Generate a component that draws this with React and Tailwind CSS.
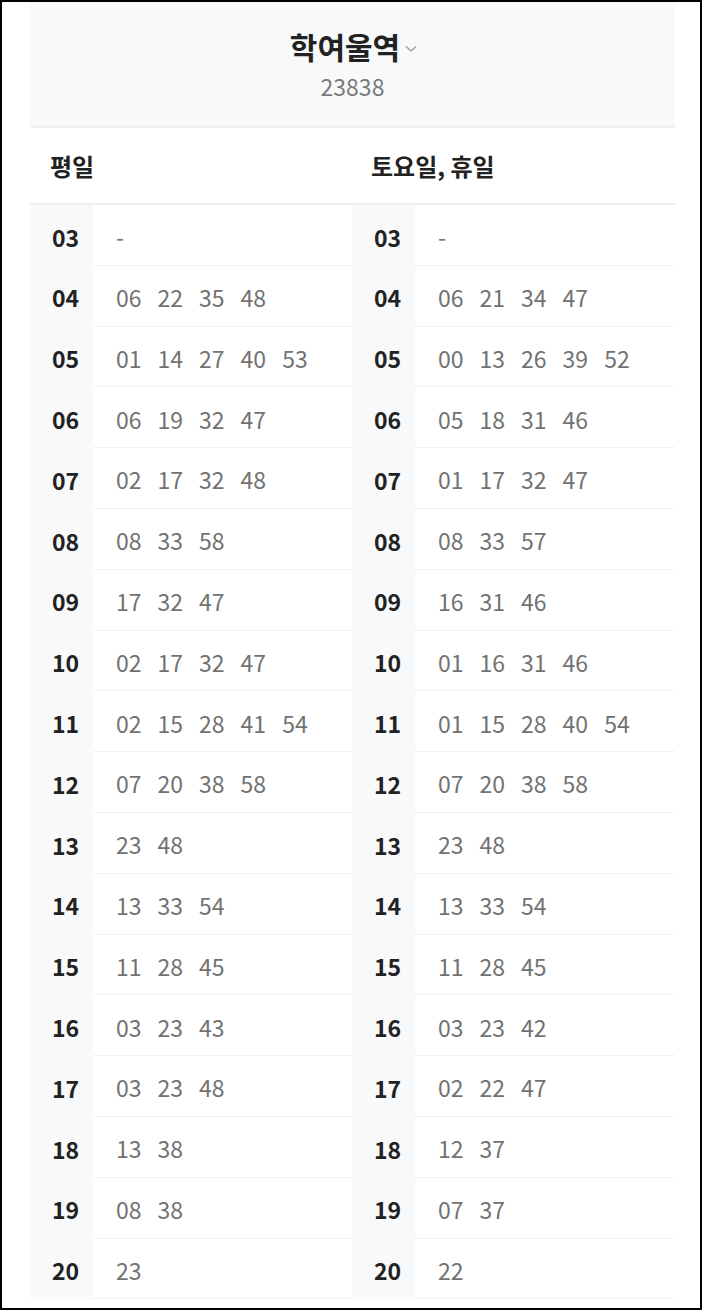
import React from "react";

const weekday = [
  ["03", ["-"]],
  ["04", ["06", "22", "35", "48"]],
  ["05", ["01", "14", "27", "40", "53"]],
  ["06", ["06", "19", "32", "47"]],
  ["07", ["02", "17", "32", "48"]],
  ["08", ["08", "33", "58"]],
  ["09", ["17", "32", "47"]],
  ["10", ["02", "17", "32", "47"]],
  ["11", ["02", "15", "28", "41", "54"]],
  ["12", ["07", "20", "38", "58"]],
  ["13", ["23", "48"]],
  ["14", ["13", "33", "54"]],
  ["15", ["11", "28", "45"]],
  ["16", ["03", "23", "43"]],
  ["17", ["03", "23", "48"]],
  ["18", ["13", "38"]],
  ["19", ["08", "38"]],
  ["20", ["23"]],
];

const holiday = [
  ["03", ["-"]],
  ["04", ["06", "21", "34", "47"]],
  ["05", ["00", "13", "26", "39", "52"]],
  ["06", ["05", "18", "31", "46"]],
  ["07", ["01", "17", "32", "47"]],
  ["08", ["08", "33", "57"]],
  ["09", ["16", "31", "46"]],
  ["10", ["01", "16", "31", "46"]],
  ["11", ["01", "15", "28", "40", "54"]],
  ["12", ["07", "20", "38", "58"]],
  ["13", ["23", "48"]],
  ["14", ["13", "33", "54"]],
  ["15", ["11", "28", "45"]],
  ["16", ["03", "23", "42"]],
  ["17", ["02", "22", "47"]],
  ["18", ["12", "37"]],
  ["19", ["07", "37"]],
  ["20", ["22"]],
];

const Column = ({ rows }) => (
  <div className="flex flex-col">
    {rows.map(([hour, mins]) => (
      <div key={hour} className="flex h-[60.8px]">
        <div className="w-[63px] bg-[#f8f9fb] pl-[22px] pt-[3px] flex items-center text-[23px] font-bold text-[#222]">
          {hour}
        </div>
        <div className="flex-1 flex items-center gap-[16px] pl-[23px] pt-[3px] border-b border-[#f1f2f4] text-[23px] text-[#727272]">
          {mins.map((m, i) => (
            <span key={i}>{m}</span>
          ))}
        </div>
      </div>
    ))}
  </div>
);

export default function App() {
  return (
    <div
      className="w-[702px] h-[1310px] border-2 border-black overflow-hidden bg-white"
      style={{ fontFamily: '"Noto Sans CJK KR", "Noto Sans", sans-serif' }}
    >
      <div className="ml-[28px] w-[645px]">
        <div className="h-[126px] bg-[#f8f9fb] border-b-2 border-[#eef0f2] flex flex-col items-center pt-[24px]">
          <div className="flex items-center gap-[5px] pl-[2px]">
            <span className="text-[30px] leading-[40px] font-bold text-[#222]">학여울역</span>
            <svg width="12" height="8" viewBox="0 0 12 8" className="mt-[6px]">
              <path d="M1 1.5 L6 6 L11 1.5" fill="none" stroke="#999" strokeWidth="1.3" />
            </svg>
          </div>
          <div className="mt-[6px] text-[23px] leading-[28px] text-[#7a7a7a]">23838</div>
        </div>
        <div className="grid grid-cols-[322px_323px] h-[77px] border-b-2 border-[#eceef0] items-center">
          <div className="pl-[20px] text-[24px] font-bold text-[#222]">평일</div>
          <div className="pl-[19px] text-[24px] font-bold text-[#222]">토요일, 휴일</div>
        </div>
        <div className="grid grid-cols-[322px_323px]">
          <Column rows={weekday} />
          <Column rows={holiday} />
        </div>
      </div>
    </div>
  );
}
